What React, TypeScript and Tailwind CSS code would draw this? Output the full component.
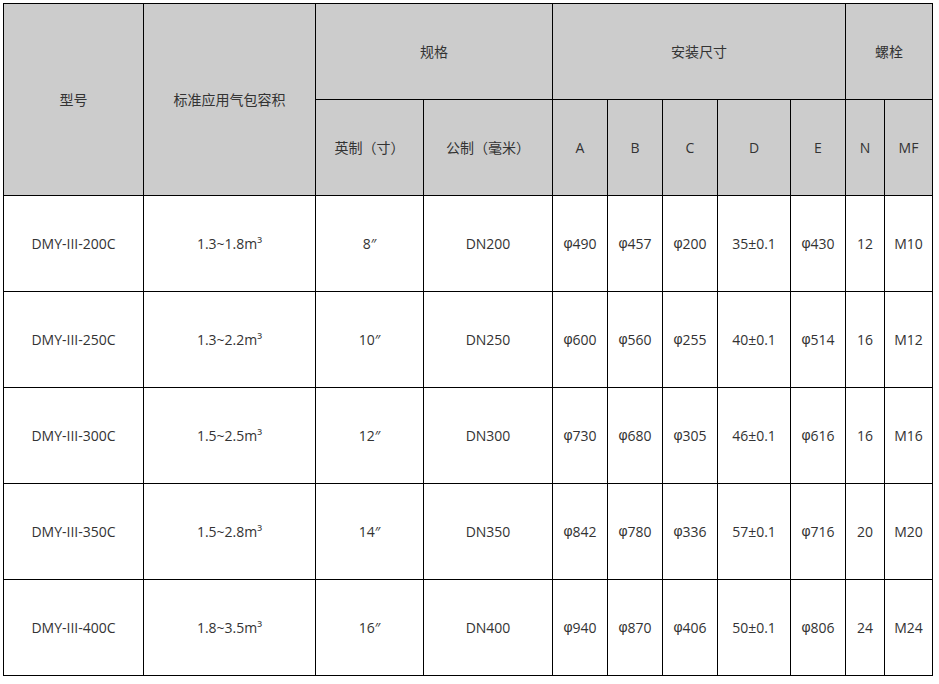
const rows = [
  ['DMY-III-200C', '1.3~1.8m³', '8″', 'DN200', 'φ490', 'φ457', 'φ200', '35±0.1', 'φ430', '12', 'M10'],
  ['DMY-III-250C', '1.3~2.2m³', '10″', 'DN250', 'φ600', 'φ560', 'φ255', '40±0.1', 'φ514', '16', 'M12'],
  ['DMY-III-300C', '1.5~2.5m³', '12″', 'DN300', 'φ730', 'φ680', 'φ305', '46±0.1', 'φ616', '16', 'M16'],
  ['DMY-III-350C', '1.5~2.8m³', '14″', 'DN350', 'φ842', 'φ780', 'φ336', '57±0.1', 'φ716', '20', 'M20'],
  ['DMY-III-400C', '1.8~3.5m³', '16″', 'DN400', 'φ940', 'φ870', 'φ406', '50±0.1', 'φ806', '24', 'M24'],
]

const head = 'flex items-center justify-center bg-[#cccccc]'
const cell = 'flex items-center justify-center bg-white'

// the phi sign in the reference is the looped form
const Value = ({ v }: { v: string }) =>
  v.startsWith('φ') ? (
    <>
      <span className="font-['Liberation_Sans',sans-serif]">φ</span>
      {v.slice(1)}
    </>
  ) : (
    <>{v}</>
  )

export default function App() {
  return (
    <div className="min-h-screen bg-white p-[3px] font-['Open_Sans','Noto_Sans_CJK_SC',sans-serif] text-[14px] text-[#333333]">
      <div className="grid w-fit grid-cols-[139px_171px_107px_128px_54px_54px_54px_72px_54px_38px_47px] grid-rows-[95px_95px_95px_95px_95px_95px_95px] gap-px bg-black p-px">
        <div className={`${head} row-span-2`}>型号</div>
        <div className={`${head} row-span-2`}>标准应用气包容积</div>
        <div className={`${head} col-span-2`}>规格</div>
        <div className={`${head} col-span-5`}>安装尺寸</div>
        <div className={`${head} col-span-2`}>螺栓</div>
        <div className={head}>英制（寸）</div>
        <div className={head}>公制（毫米）</div>
        <div className={head}>A</div>
        <div className={head}>B</div>
        <div className={head}>C</div>
        <div className={head}>D</div>
        <div className={head}>E</div>
        <div className={head}>N</div>
        <div className={head}>MF</div>
        {rows.map((r) =>
          r.map((v, i) => (
            <div key={r[0] + i} className={cell}>
              <Value v={v} />
            </div>
          ))
        )}
      </div>
    </div>
  )
}
